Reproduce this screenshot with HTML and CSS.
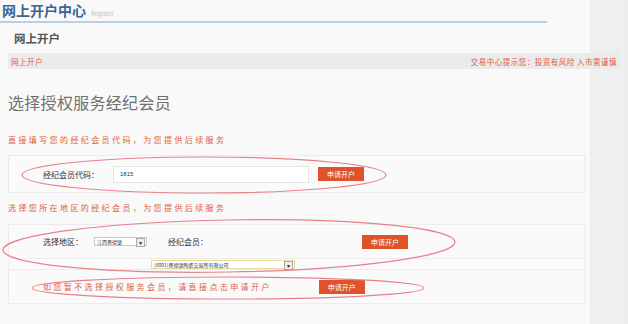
FILE: index.html
```html
<!DOCTYPE html>
<html lang="zh-CN">
<head>
  <meta charset="UTF-8" />
  <title>网上开户中心</title>
  <link rel="stylesheet" href="styles.css">
</head>
<body>

<div class="layout">
  <div class="page">

    <!-- Header -->
    <div class="top">
      <h1>网上开户中心</h1>
      <span class="sub">Register</span>
    </div>

    <h2 class="section-title">网上开户</h2>

    <div class="crumb">
      <span>网上开户</span>
      <span class="tip">交易中心提示您：投资有风险 入市需谨慎</span>
    </div>

    <h3 class="choose">选择授权服务经纪会员</h3>

    <!-- Direct code -->
    <p class="note">直接填写您的经纪会员代码，为您提供后续服务</p>
    <div class="box box-code">
      <span class="label">经纪会员代码：</span>
      <input class="code" type="text" value="1815">
      <button class="btn">申请开户</button>
    </div>

    <!-- By region -->
    <p class="note note-region">选择您所在地区的经纪会员，为您提供后续服务</p>
    <div class="box box-region">
      <div class="row">
        <span class="label">选择地区：</span>
        <span class="select small">江西景德镇<i class="arrow">▾</i></span>
        <span class="label member">经纪会员：</span>
        <button class="btn btn-region">申请开户</button>
      </div>
      <div class="row row-member">
        <span class="select wide">(8001)景德镇陶瓷交易所有限公司<i class="arrow">▾</i></span>
      </div>
    </div>

    <div class="box box-skip">
      <span class="skip-text">如您暂不选择授权服务会员，请直接点击申请开户</span>
      <button class="btn btn-skip">申请开户</button>
    </div>

  </div>
  <div class="side"></div>
</div>

<!-- hand-drawn marks over the form -->
<svg class="marks" width="628" height="324" viewBox="0 0 628 324">
  <ellipse cx="204" cy="175" rx="182" ry="18" />
  <ellipse cx="229" cy="246" rx="226" ry="26" transform="rotate(-1 229 246)" />
  <ellipse cx="228" cy="288" rx="196" ry="11" />
</svg>

</body>
</html>
```

FILE: styles.css
```css
body {
  font-family: "Noto Sans CJK SC", "Liberation Sans", sans-serif;
  margin: 0;
  padding: 0;
  background: #f9f9f9;
  color: #444;
}

.layout {
  display: flex;
  height: 324px;
  overflow: hidden;
}

.page {
  width: 590px;
  flex-shrink: 0;
  position: relative;
  z-index: 1;
}

.side {
  flex: 1;
  background: repeating-linear-gradient(to right, #eeeeee 0, #eeeeee 6px, #f3f3f3 7px, #eeeeee 8px);
  border-left: 1px solid #ececec;
}

/* Header */
.top {
  display: flex;
  align-items: baseline;
  width: 545px;
  padding: 0 0 2px 2px;
  border-bottom: 2px solid #bccfe0;
  height: 19px;
}

h1 {
  margin: 0;
  font-size: 14px;
  line-height: 20px;
  color: #3a6593;
  font-weight: bold;
}

.sub {
  margin-left: 5px;
  font-size: 6px;
  color: #c2c2c2;
}

.section-title {
  margin: 8px 0 0 14px;
  font-size: 11.5px;
  line-height: 14px;
  color: #555;
}

.crumb {
  display: flex;
  justify-content: space-between;
  align-items: center;
  margin: 8px -30px 0 8px;
  padding: 0 3px 0 3px;
  height: 16px;
  background: #ebebeb;
  font-size: 7.5px;
  letter-spacing: 0.5px;
  color: #e0603a;
}

.choose {
  margin: 24px 0 0 8px;
  font-size: 16px;
  line-height: 18px;
  font-weight: normal;
  color: #707070;
  letter-spacing: 0.3px;
}

.note {
  margin: 24px 0 0 8px;
  font-size: 8px;
  line-height: 10px;
  letter-spacing: 2.4px;
  color: #e0603a;
}

.note-region {
  margin-top: 10px;
}

.box {
  margin: 10px 5px 0 8px;
  background: #fafafa;
  border: 1px solid #ececec;
  font-size: 8px;
  color: #333;
}

.label {
  color: #333;
}

.box-code {
  display: flex;
  align-items: center;
  height: 36px;
  padding-left: 34px;
}

.code {
  margin-left: 14px;
  width: 196px;
  height: 17px;
  padding: 0 0 0 6px;
  border: 1px solid #e4e4e4;
  background: #fff;
  font-size: 6px;
  font-family: "Liberation Sans", sans-serif;
  color: #333;
  box-sizing: border-box;
}

.btn {
  height: 14px;
  width: 46px;
  padding: 0;
  border: none;
  background: #df522a;
  color: #fff;
  font-size: 7px;
  font-family: "Noto Sans CJK SC", sans-serif;
}

.box-code .btn {
  margin-left: 9px;
}

.note-region + .box-region {
  margin-top: 11px;
}

.row {
  display: flex;
  align-items: center;
  padding-left: 34px;
  height: 33px;
}

.row-member {
  height: 10px;
  padding-left: 142px;
  border-top: 1px solid #ececec;
}

.select {
  position: relative;
  display: inline-flex;
  align-items: center;
  height: 9px;
  border: 1px solid #c8c8c8;
  background: #fff;
  font-size: 5px;
  padding-left: 2px;
  box-sizing: border-box;
}

.select.small {
  margin-left: 11px;
  width: 53px;
}

.select.wide {
  width: 144px;
  border-color: #e9dca0;
}

.arrow {
  position: absolute;
  right: 1px;
  top: 0;
  width: 7px;
  height: 7px;
  border: 1px solid #aaa;
  font-style: normal;
  font-size: 6px;
  line-height: 7px;
  text-align: center;
  background: #eee;
}

.member {
  margin-left: 21px;
}

.btn-region {
  margin-left: 154px;
}

.box-skip {
  display: flex;
  align-items: center;
  margin-top: 0;
  border-top: none;
  height: 33px;
  padding-left: 34px;
}

.skip-text {
  color: #e0603a;
  font-size: 8px;
  letter-spacing: 2.4px;
}

.btn-skip {
  margin-left: 47px;
}

.marks {
  position: absolute;
  top: 0;
  left: 0;
  z-index: 2;
  pointer-events: none;
}

.marks ellipse {
  fill: none;
  stroke: #e8808a;
  stroke-width: 1.2;
}
```
